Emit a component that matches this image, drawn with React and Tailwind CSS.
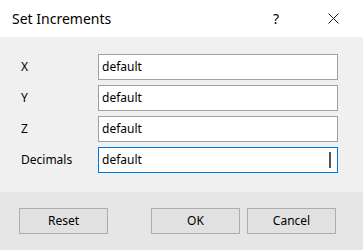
import React from 'react';

const fields = ['X', 'Y', 'Z', 'Decimals'];

const DialogButton = ({ children }) => (
  <button className="h-[26px] w-[89px] border border-[#adadad] bg-[#e1e1e1] text-[12px] text-black">
    {children}
  </button>
);

const App = () => {
  return (
    <div
      className="flex h-[250px] w-[363px] flex-col overflow-hidden bg-[#f0f0f0]"
      style={{ fontFamily: '"Segoe UI", "Noto Sans", sans-serif' }}
    >
      {/* Title bar */}
      <div className="flex h-[37px] items-center bg-white pl-[12px]">
        <span className="flex-1 text-[14px] text-black">Set Increments</span>
        <span className="w-[14px] text-center text-[14px] text-black">?</span>
        <span className="flex w-[80px] items-center justify-center pl-[20px]">
          <svg width="11" height="11" viewBox="0 0 11 11" fill="none" stroke="#222" strokeWidth="1">
            <path d="M0.5 0.5 L10.5 10.5 M10.5 0.5 L0.5 10.5" />
          </svg>
        </span>
      </div>

      {/* Fields */}
      <div className="flex flex-1 flex-col gap-[5px] pt-[17px]">
        {fields.map((f, i) => (
          <div key={f} className="flex h-[26px] items-center">
            <span className="w-[98px] pl-[21px] text-[12px] text-black">{f}</span>
            <div
              className={`flex h-[26px] w-[240px] items-center border bg-white pl-[3px] pr-[6px] text-[12px] text-black ${
                i === 3 ? 'border-[#0078d7]' : 'border-[#a0a0a0]'
              }`}
            >
              <span className="flex-1">default</span>
              {i === 3 && <span className="h-[16px] w-[2px] bg-[#555]" />}
            </div>
          </div>
        ))}
      </div>

      {/* Footer */}
      <div className="flex h-[58px] items-start bg-[#e6e6e6] pt-[16px] pl-[19px]">
        <DialogButton>Reset</DialogButton>
        <div className="ml-[43px] flex gap-[7px]">
          <DialogButton>OK</DialogButton>
          <DialogButton>Cancel</DialogButton>
        </div>
      </div>
    </div>
  );
};

export default App;
